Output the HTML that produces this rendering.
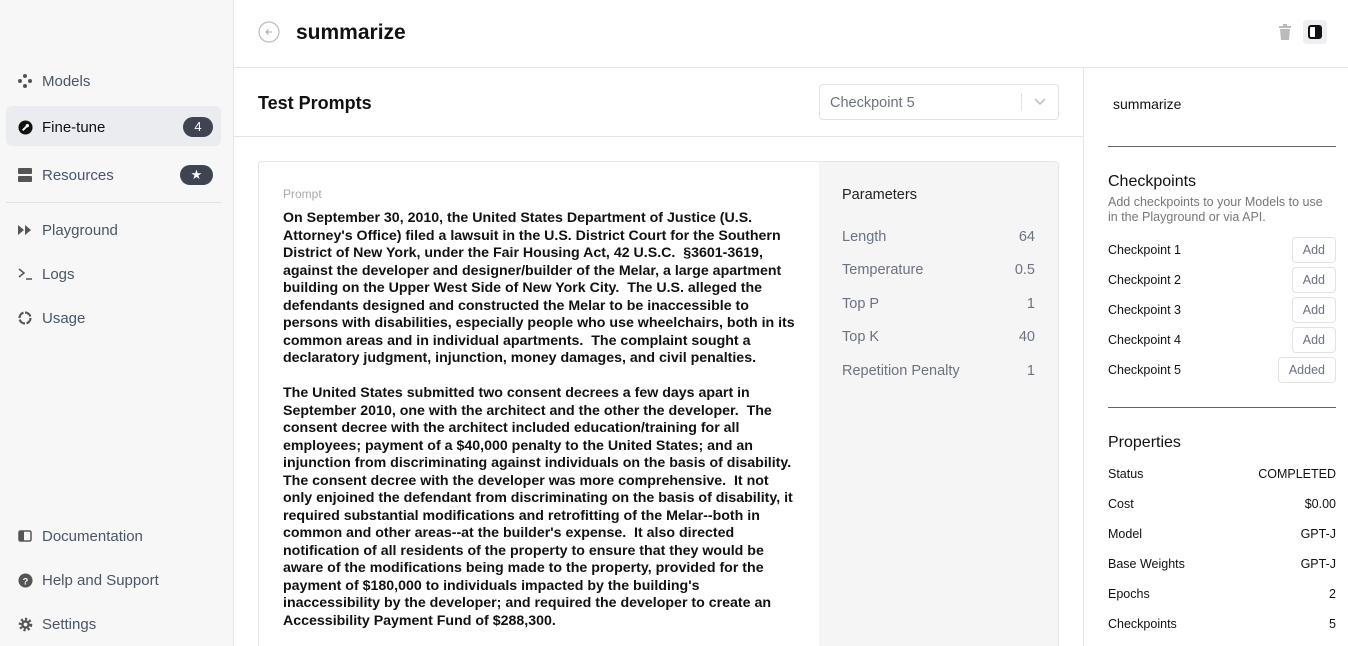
<!DOCTYPE html>
<html style="width:1348px;height:646px;overflow:hidden"><head><meta charset="utf-8"><style>
*{box-sizing:border-box;margin:0;padding:0}
body{width:1348px;height:646px;overflow:hidden;font-family:"Liberation Sans",sans-serif;background:#fff;color:#111;position:relative}
.side{position:absolute;left:0;top:0;width:234px;height:646px;background:#f7f7f7;border-right:1px solid #e5e5e5}
.nav{position:absolute;left:6px;width:215px;height:40px;display:flex;align-items:center;padding-left:11px;font-size:15px;color:#4b5563;padding-top:2px}
.nav .ic{width:16px;height:16px;margin-right:9px;display:flex;align-items:center;justify-content:center}
.nav.act{background:#ebecf0;border-radius:6px;color:#111}
.badge{position:absolute;right:8px;top:11px;background:#3f4452;color:#fff;border-radius:10px;font-size:13px;height:20px;width:30px;text-align:center;line-height:20px}
.hdr{position:absolute;left:234px;top:0;right:0;height:68px;border-bottom:1px solid #e5e5e5}
.main{position:absolute;left:234px;top:68px;width:850px;height:578px;border-right:1px solid #e5e5e5;overflow:hidden}
.card{position:absolute;left:24px;top:93px;width:801px;height:520px;border:1px solid #e5e5e5;border-radius:4px;overflow:hidden}
.prm{position:absolute;left:560px;top:0;width:241px;height:520px;background:#f5f5f5}
.row{position:absolute;left:23px;right:25px;font-size:14.5px;color:#6b7280;display:flex;justify-content:space-between}
.ptext{position:absolute;left:24px;top:48px;font-size:14.2px;font-weight:bold;line-height:17.5px;white-space:nowrap;color:#111}
.rp{position:absolute;left:1084px;top:68px;width:264px;height:578px;overflow:hidden}
.cp{position:absolute;left:24px;right:12px;font-size:12.5px;display:flex;justify-content:space-between;align-items:center}
.btn{border:1px solid #e2e2e2;border-radius:4px;height:26px;padding:0 10px;line-height:24px;color:#6b7280;font-size:12.5px}
.pr{position:absolute;left:24px;right:12px;font-size:12.5px;display:flex;justify-content:space-between}
</style></head><body>
<div class="side">
 <div class="nav" style="top:60px"><span class="ic"><svg width="14" height="14" viewBox="0 0 14 14" fill="#555"><circle cx="7" cy="2" r="2"/><circle cx="2" cy="7" r="2"/><circle cx="12" cy="7" r="2"/><circle cx="7" cy="12" r="2"/></svg></span>Models</div>
 <div class="nav act" style="top:106px"><span class="ic"><svg width="15" height="15" viewBox="0 0 16 16"><circle cx="8" cy="8" r="7.5" fill="#111"/><path d="M5 11l4-4" stroke="#fff" stroke-width="2"/><circle cx="10" cy="6" r="1.8" fill="#fff"/></svg></span>Fine-tune<span class="badge">4</span></div>
 <div class="nav" style="top:154px"><span class="ic"><svg width="14" height="14" viewBox="0 0 14 14" fill="#555"><rect x="0" y="0" width="14" height="6" rx="1"/><rect x="0" y="8" width="14" height="6" rx="1"/></svg></span>Resources<span class="badge" style="width:33px">★</span></div>
 <div style="position:absolute;left:6px;top:202px;width:215px;border-top:1px solid #e2e2e2"></div>
 <div class="nav" style="top:209px"><span class="ic"><svg width="14" height="10" viewBox="0 0 14 10" fill="#555"><path d="M0 0l6 5-6 5zM7 0l6 5-6 5z"/></svg></span>Playground</div>
 <div class="nav" style="top:253px"><span class="ic"><svg width="14" height="12" viewBox="0 0 14 12" fill="none" stroke="#555" stroke-width="1.5"><path d="M1 1l5 4-5 4M8 11h6"/></svg></span>Logs</div>
 <div class="nav" style="top:297px"><span class="ic"><svg width="14" height="14" viewBox="0 0 14 14" fill="none" stroke="#555" stroke-width="2.2"><circle cx="7" cy="7" r="5.5" stroke-dasharray="7 1.6"/></svg></span>Usage</div>
 <div class="nav" style="top:515px"><span class="ic"><svg width="14" height="12" viewBox="0 0 14 12"><rect x="1" y="1" width="12" height="10" rx="1.5" fill="none" stroke="#555" stroke-width="1.5"/><rect x="1" y="1" width="5" height="10" fill="#555"/></svg></span>Documentation</div>
 <div class="nav" style="top:559px"><span class="ic"><svg width="15" height="15" viewBox="0 0 16 16"><circle cx="8" cy="8" r="7.5" fill="#555"/><text x="8" y="12" font-size="10" font-weight="bold" fill="#fff" text-anchor="middle" font-family="Liberation Sans">?</text></svg></span>Help and Support</div>
 <div class="nav" style="top:603px"><span class="ic"><svg width="15" height="15" viewBox="0 0 16 16"><circle cx="8" cy="8" r="5.5" fill="none" stroke="#555" stroke-width="3.5" stroke-dasharray="2.2 2"/><circle cx="8" cy="8" r="4.5" fill="#555"/><circle cx="8" cy="8" r="2" fill="#f7f7f7"/></svg></span>Settings</div>
</div>
<div class="hdr">
 <svg style="position:absolute;left:24px;top:21px" width="22" height="22" viewBox="0 0 22 22"><circle cx="11" cy="11" r="10" fill="none" stroke="#bbb" stroke-width="1.2"/><path d="M14 11H8M10.5 8.5L8 11l2.5 2.5" fill="none" stroke="#aaa" stroke-width="1.1"/></svg>
 <div style="position:absolute;left:62px;top:21px;font-size:21px;font-weight:bold">summarize</div>
 <svg style="position:absolute;left:1045px;top:24px" width="12" height="16" viewBox="0 0 12 16" fill="#bbb"><rect x="0" y="2" width="12" height="2"/><rect x="4" y="0" width="4" height="2"/><path d="M1 5h10l-1 11H2z"/></svg>
 <div style="position:absolute;left:1069px;top:20px;width:24px;height:24px;background:#eceef2;border-radius:4px"><div style="position:absolute;left:5px;top:5px;width:14px;height:14px;border:2px solid #111;border-radius:3px;background:linear-gradient(90deg,#fff 50%,#111 50%)"></div></div>
</div>
<div class="main">
 <div style="position:absolute;left:24px;top:25px;font-size:18px;font-weight:bold">Test Prompts</div>
 <div style="position:absolute;left:585px;top:16px;width:240px;height:36px;border:1px solid #e2e2e2;border-radius:4px;font-size:14.5px;color:#6b7280;padding:10px 10px 0">Checkpoint 5<div style="position:absolute;right:36px;top:8px;height:18px;border-left:1px solid #e2e2e2"></div><svg style="position:absolute;right:12px;top:13px" width="12" height="8" viewBox="0 0 12 8" fill="none" stroke="#bbb" stroke-width="1.5"><path d="M1 1l5 5 5-5"/></svg></div>
 <div style="position:absolute;left:0;right:0;top:68px;border-top:1px solid #e5e5e5"></div>
 <div class="card">
  <div style="position:absolute;left:24px;top:25px;font-size:12px;color:#aaa">Prompt</div>
  <div class="ptext">On September 30, 2010, the United States Department of Justice (U.S.<br>Attorney's Office) filed a lawsuit in the U.S. District Court for the Southern<br>District of New York, under the Fair Housing Act, 42 U.S.C. &nbsp;§3601-3619,<br>against the developer and designer/builder of the Melar, a large apartment<br>building on the Upper West Side of New York City. &nbsp;The U.S. alleged the<br>defendants designed and constructed the Melar to be inaccessible to<br>persons with disabilities, especially people who use wheelchairs, both in its<br>common areas and in individual apartments. &nbsp;The complaint sought a<br>declaratory judgment, injunction, money damages, and civil penalties.<br><br>The United States submitted two consent decrees a few days apart in<br>September 2010, one with the architect and the other the developer. &nbsp;The<br>consent decree with the architect included education/training for all<br>employees; payment of a $40,000 penalty to the United States; and an<br>injunction from discriminating against individuals on the basis of disability.<br>The consent decree with the developer was more comprehensive. &nbsp;It not<br>only enjoined the defendant from discriminating on the basis of disability, it<br>required substantial modifications and retrofitting of the Melar--both in<br>common and other areas--at the builder's expense. &nbsp;It also directed<br>notification of all residents of the property to ensure that they would be<br>aware of the modifications being made to the property, provided for the<br>payment of $180,000 to individuals impacted by the building's<br>inaccessibility by the developer; and required the developer to create an<br>Accessibility Payment Fund of $288,300.</div>
  <div class="prm">
   <div style="position:absolute;left:23px;top:25px;font-size:14.5px;color:#222">Parameters</div>
   <div class="row" style="top:67px"><span>Length</span><span>64</span></div>
   <div class="row" style="top:100px"><span>Temperature</span><span>0.5</span></div>
   <div class="row" style="top:134px"><span>Top P</span><span>1</span></div>
   <div class="row" style="top:167px"><span>Top K</span><span>40</span></div>
   <div class="row" style="top:201px"><span>Repetition Penalty</span><span>1</span></div>
  </div>
 </div>
</div>
<div class="rp">
 <div style="position:absolute;left:29px;top:28px;font-size:14px">summarize</div>
 <div style="position:absolute;left:24px;right:12px;top:78px;border-top:1px solid #666"></div>
 <div style="position:absolute;left:24px;top:105px;font-size:16px">Checkpoints</div>
 <div style="position:absolute;left:24px;top:127px;font-size:12.5px;color:#777;line-height:15px">Add checkpoints to your Models to use<br>in the Playground or via API.</div>
 <div class="cp" style="top:169px"><span>Checkpoint 1</span><span class="btn">Add</span></div>
 <div class="cp" style="top:199px"><span>Checkpoint 2</span><span class="btn">Add</span></div>
 <div class="cp" style="top:229px"><span>Checkpoint 3</span><span class="btn">Add</span></div>
 <div class="cp" style="top:259px"><span>Checkpoint 4</span><span class="btn">Add</span></div>
 <div class="cp" style="top:289px"><span>Checkpoint 5</span><span class="btn">Added</span></div>
 <div style="position:absolute;left:24px;right:12px;top:339px;border-top:1px solid #666"></div>
 <div style="position:absolute;left:24px;top:366px;font-size:16px">Properties</div>
 <div class="pr" style="top:399px"><span>Status</span><span>COMPLETED</span></div>
 <div class="pr" style="top:429px"><span>Cost</span><span>$0.00</span></div>
 <div class="pr" style="top:459px"><span>Model</span><span>GPT-J</span></div>
 <div class="pr" style="top:489px"><span>Base Weights</span><span>GPT-J</span></div>
 <div class="pr" style="top:519px"><span>Epochs</span><span>2</span></div>
 <div class="pr" style="top:549px"><span>Checkpoints</span><span>5</span></div>
</div>
</body></html>
